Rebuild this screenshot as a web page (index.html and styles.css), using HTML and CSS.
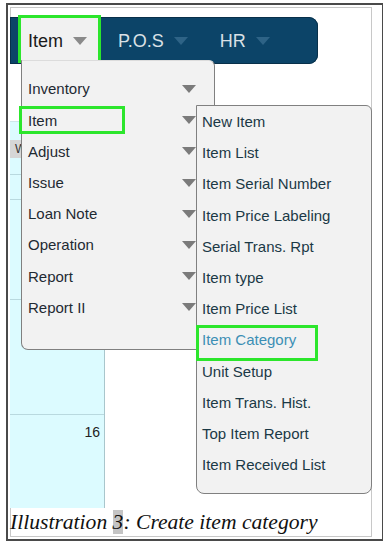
FILE: index.html
```html
<!DOCTYPE html>
<html lang="en">
<head>
  <meta charset="UTF-8" />
  <title>Create item category</title>
  <link rel="stylesheet" href="styles.css">
</head>
<body>
  <div class="frame">
    <div class="screen">

      <div class="navbar">
        <div class="tab active">Item <span class="tri tri-light"></span></div>
        <div class="tab">P.O.S <span class="tri tri-dark"></span></div>
        <div class="tab tab-hr">HR <span class="tri tri-dark"></span></div>
      </div>

      <div class="cal">
        <div class="cal-col">
          <div class="cell cell-top"></div>
          <div class="cell cell-a"><span class="wbtn">W</span></div>
          <div class="cell cell-b"></div>
          <div class="cell cell-c"></div>
          <div class="cell cell-d"></div>
          <div class="cell cell-e"><span class="day">16</span></div>
        </div>
      </div>

      <div class="caption">Illustration <span class="num">3</span>: Create item category</div>

      <!-- main dropdown -->
      <ul class="menu menu-main">
        <li>Inventory <span class="tri"></span></li>
        <li>Item <span class="tri"></span><span class="mark mark-item"></span></li>
        <li>Adjust <span class="tri"></span></li>
        <li>Issue <span class="tri"></span></li>
        <li>Loan Note <span class="tri"></span></li>
        <li>Operation <span class="tri"></span></li>
        <li>Report <span class="tri"></span></li>
        <li>Report II <span class="tri"></span></li>
      </ul>

      <!-- item submenu -->
      <ul class="menu menu-sub">
        <li>New Item</li>
        <li>Item List</li>
        <li>Item Serial Number</li>
        <li>Item Price Labeling</li>
        <li>Serial Trans. Rpt</li>
        <li>Item type</li>
        <li>Item Price List</li>
        <li class="current">Item Category<span class="mark mark-cat"></span></li>
        <li>Unit Setup</li>
        <li>Item Trans. Hist.</li>
        <li>Top Item Report</li>
        <li>Item Received List</li>
      </ul>

    </div>
  </div>
</body>
</html>
```

FILE: styles.css
```css
body {
  margin: 0;
  background: #fff;
  font-family: 'Liberation Sans', Arial, sans-serif;
}
.frame {
  margin: 3px 0 0 6px;
  width: 368px;
  height: 532px;
  padding: 2px 4px 0 2px;
  border: 2px solid #4a4a4a;
  box-sizing: content-box;
}
.screen {
  position: relative;
  width: 360px;
  height: 528px;
  border: 1px solid #c8c8c8;
  display: flex;
  flex-direction: column;
}

/* top navigation */
.navbar {
  margin: 9px 0 0 -1px;
  width: 308px;
  height: 47px;
  background: #0c4468;
  border-radius: 0 9px 9px 0;
  box-shadow: inset 0 0 0 1px #08304a;
  display: flex;
  align-items: flex-start;
  padding-left: 8px;
  box-sizing: border-box;
  flex-shrink: 0;
}
.tab {
  display: flex;
  align-items: center;
  height: 48px;
  margin-top: -2px;
  font-size: 18px;
  color: #d9e0e5;
  padding-top: 4px;
  box-sizing: border-box;
  margin-left: 17px;
}
.tab .tri {
  margin-left: 10px;
}
.tab.active {
  margin-left: 0;
  width: 83px;
  padding-left: 7px;
  background: #f1f1f1;
  color: #1a1a1a;
  border: 3px solid #2ce62c;
}
.tab-hr {
  margin-left: 32px;
}

.tri {
  display: inline-block;
  width: 0;
  height: 0;
  border-left: 7px solid transparent;
  border-right: 7px solid transparent;
  border-top: 8px solid #7b7b7b;
}
.tri-light {
  border-top-color: #8a8a8a;
}
.tri-dark {
  border-top-color: #2e6386;
}

/* calendar behind the menus */
.cal {
  height: 444px;
  flex-shrink: 0;
}
.cal-col {
  width: 94px;
  height: 100%;
  margin-left: -1px;
  border-right: 1px solid #a9c6cc;
  display: flex;
  flex-direction: column;
}
.cell {
  background: #dcfbff;
  border-bottom: 1px solid #b9d9df;
  box-sizing: border-box;
}
.cell-top {
  height: 58px;
  background: #fff;
  border-bottom: 1px solid #cde6ea;
}
.cell-a {
  height: 53px;
  padding-top: 18px;
}
.cell-b { height: 25px; }
.cell-c { height: 100px; }
.cell-d { height: 115px; }
.cell-e {
  flex: 1;
  border-bottom: none;
  text-align: right;
  padding: 8px 4px 0 0;
}
.wbtn {
  display: block;
  width: 24px;
  height: 18px;
  background: #d6d6d6;
  font-size: 12px;
  line-height: 18px;
  color: #333;
  padding-left: 5px;
  box-sizing: border-box;
}
.day {
  font-size: 14px;
  color: #222;
}

.caption {
  height: 28px;
  margin-left: -1px;
  font-family: 'Liberation Serif', 'Times New Roman', serif;
  font-style: italic;
  font-size: 21.6px;
  line-height: 28px;
  color: #111;
  white-space: nowrap;
}
.caption .num {
  background: #c4c4c4;
}

/* dropdown menus */
.menu {
  position: absolute;
  margin: 0;
  list-style: none;
  background: #f2f2f2;
  border: 1px solid #808080;
  box-sizing: border-box;
}
.menu li {
  position: relative;
  height: 31.2px;
  display: flex;
  align-items: center;
  justify-content: space-between;
  font-size: 15px;
}
.menu-main {
  left: 10px;
  top: 52px;
  width: 194px;
  height: 290px;
  padding: 12.4px 18px 0 6px;
  border-top-color: #dcdcdc;
  border-radius: 0 6px 7px 7px;
  color: #1f2a32;
}
.menu-sub {
  left: 185px;
  top: 97px;
  width: 176px;
  height: 389px;
  padding: 0 0 0 5px;
  border-radius: 0 6px 8px 8px;
  color: #1b3946;
}
.menu-sub li.current {
  color: #3c8fb5;
}
.mark {
  position: absolute;
  border: 3px solid #2ce62c;
  box-sizing: border-box;
}
.mark-item {
  left: -9px;
  top: 1.4px;
  width: 106px;
  height: 28px;
}
.mark-cat {
  left: -6px;
  top: 1px;
  width: 122px;
  height: 36px;
}
```
